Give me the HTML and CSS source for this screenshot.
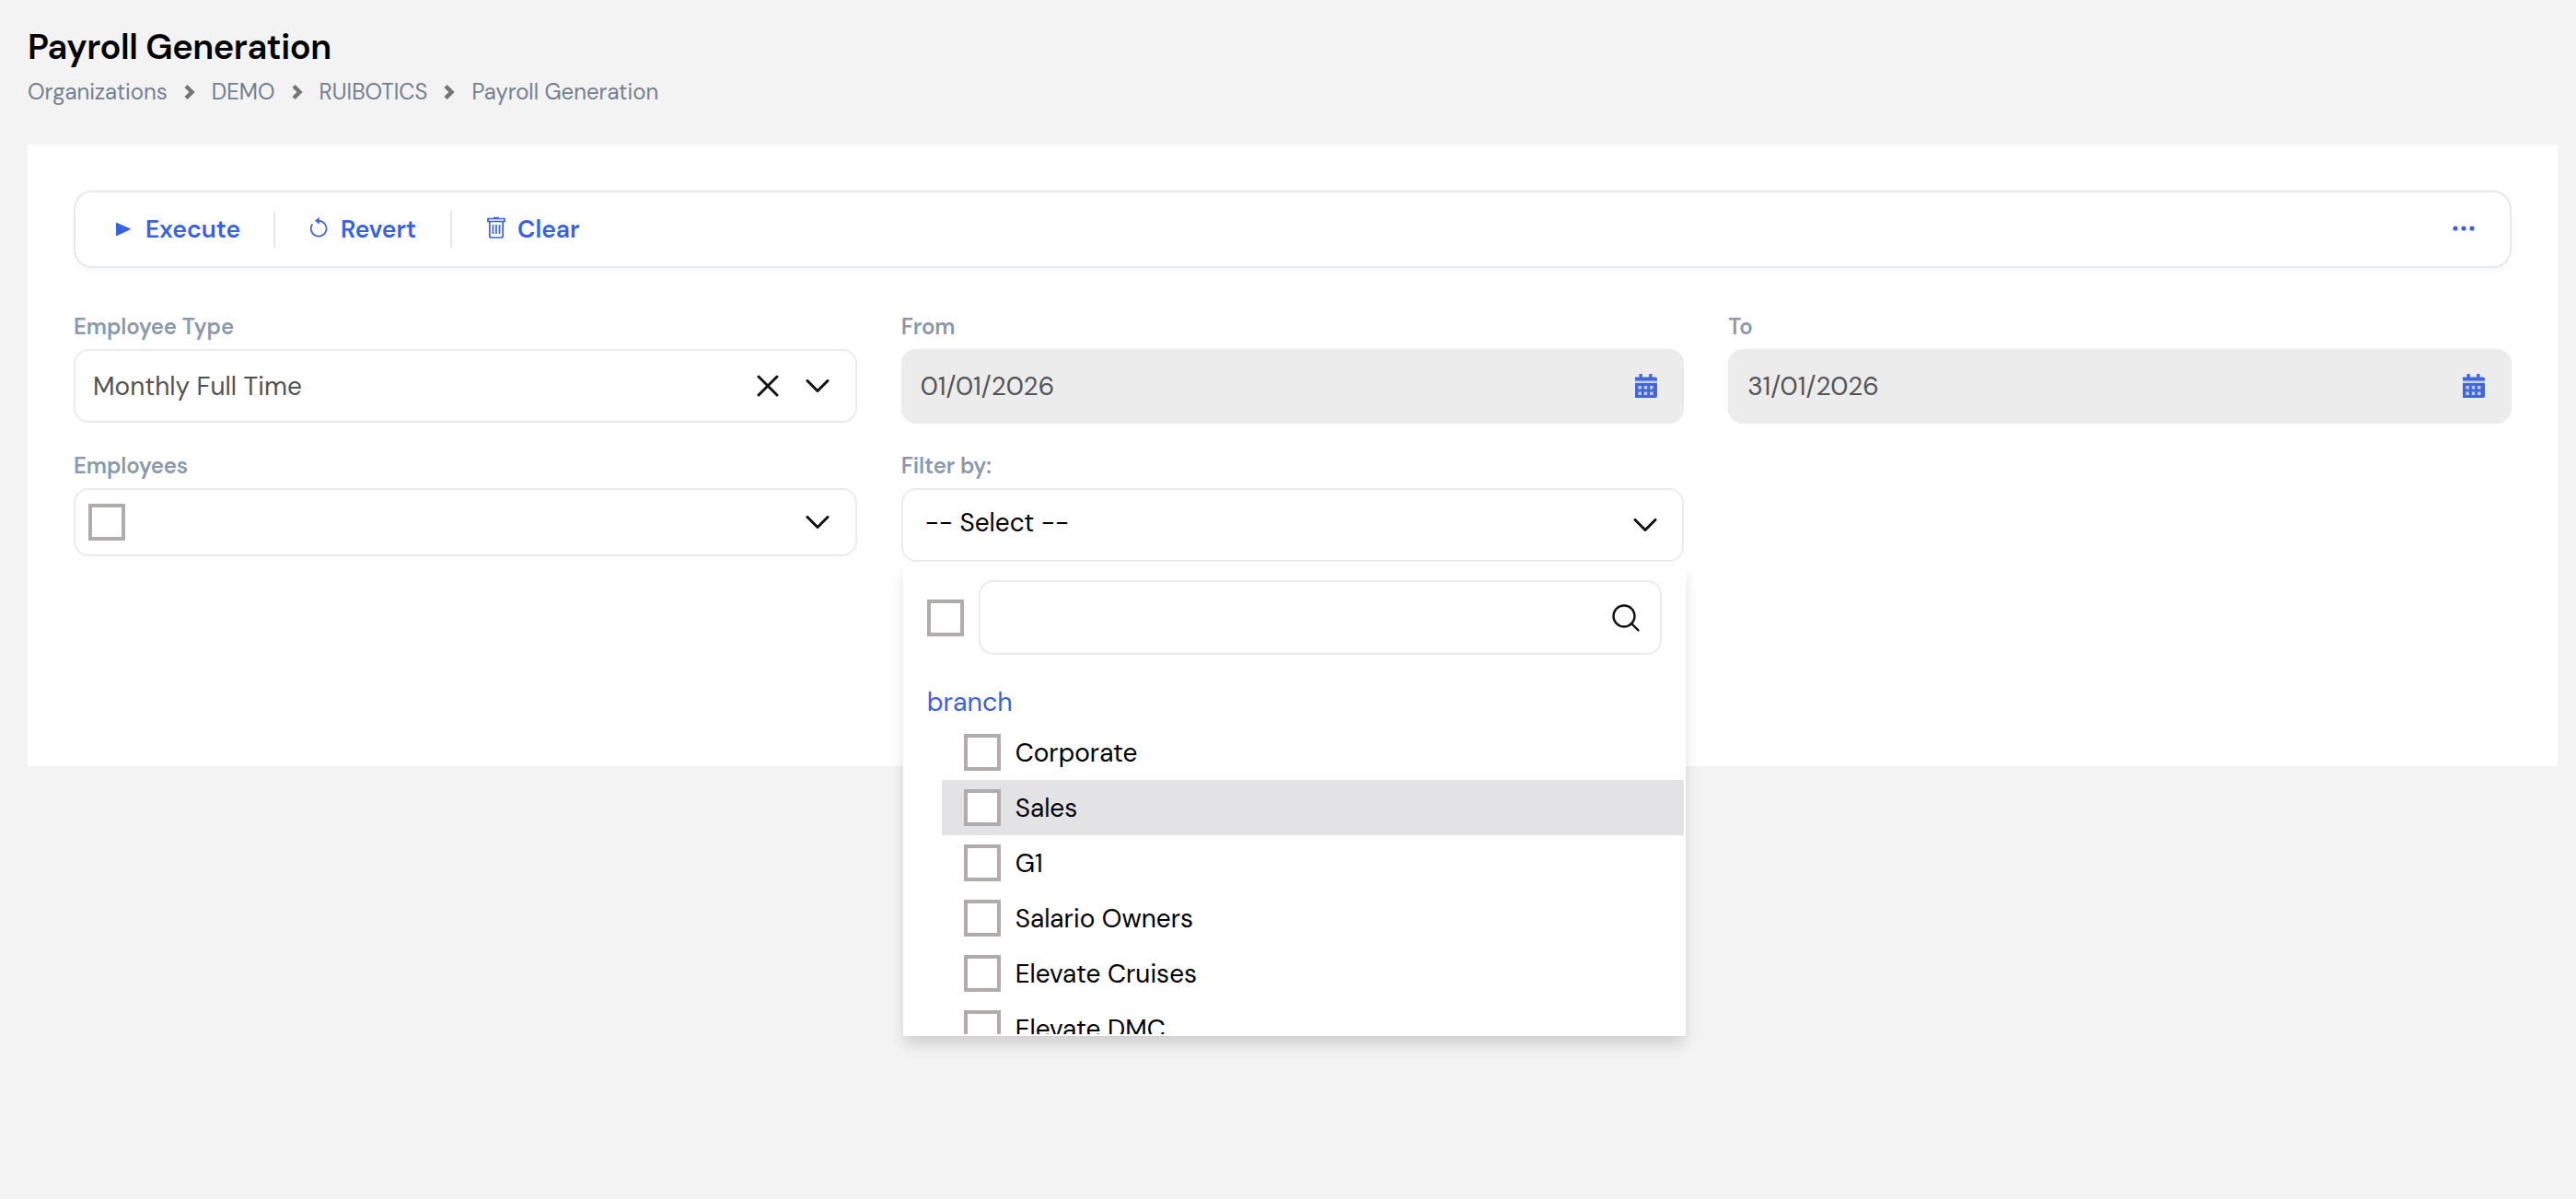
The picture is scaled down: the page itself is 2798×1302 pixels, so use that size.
FILE: index.html
```html
<!DOCTYPE html>
<html lang="en">
<head>
    <meta charset="UTF-8">
    <meta name="viewport" content="width=device-width, initial-scale=1.0">
    <title>Payroll Generation</title>
    <link rel="stylesheet" href="styles.css">
</head>
<body>
    <header class="page-header">
        <h1>Payroll Generation</h1>
        <nav class="breadcrumb">
            <a>Organizations</a>
            <svg class="sep" viewBox="0 0 12 16"><path d="M2 1.5L8.5 8 2 14.5" /></svg>
            <a>DEMO</a>
            <svg class="sep" viewBox="0 0 12 16"><path d="M2 1.5L8.5 8 2 14.5" /></svg>
            <a>RUIBOTICS</a>
            <svg class="sep" viewBox="0 0 12 16"><path d="M2 1.5L8.5 8 2 14.5" /></svg>
            <a>Payroll Generation</a>
        </nav>
    </header>

    <main class="card">
        <div class="toolbar">
            <button type="button" class="action execute">
                <svg class="icon-play" viewBox="0 0 16 16"><path d="M0 0.5L15 7q1 .8 0 1.6L0 15.5z" /></svg>
                <span>Execute</span>
            </button>
            <button type="button" class="action revert">
                <svg class="icon-revert" viewBox="0 0 20 22"><path class="line" d="M2.4 7.2A8.4 8.4 0 1 0 9.5 3.8" /><path d="M9.8 0v7.4L5 3.7z" /></svg>
                <span>Revert</span>
            </button>
            <button type="button" class="action clear">
                <svg class="icon-trash" viewBox="0 0 20 24"><path d="M7 1.5h6M1 2.5h18v3H1zM2.8 5.5v15.5q0 2 2 2h10.4q2 0 2-2V5.5M6.5 9v10M10 9v10M13.5 9v10" /></svg>
                <span>Clear</span>
            </button>
            <button type="button" class="more">
                <svg viewBox="0 0 24 6"><circle cx="3" cy="3" r="2.6" /><circle cx="12" cy="3" r="2.6" /><circle cx="21" cy="3" r="2.6" /></svg>
            </button>
        </div>

        <form class="filters">
            <div class="field">
                <label>Employee Type</label>
                <div class="control type">
                    <span>Monthly Full Time</span>
                    <svg class="icon-close" viewBox="0 0 24 24"><path d="M2 2l20 20M22 2L2 22" /></svg>
                    <svg class="icon-chevron" viewBox="0 0 26 14"><path d="M2 1.5l11 11 11-11" /></svg>
                </div>
            </div>
            <div class="field">
                <label>From</label>
                <div class="control disabled">
                    <span>01/01/2026</span>
                    <svg class="icon-calendar" viewBox="0 0 24 26"><path class="back" d="M0 7h24v17H0z" /><path d="M0 3.5h4.5V0h3.3v3.5h7.4V0h3.3v3.5H22q2 0 2 2v2H0zM0 10h24v14q0 2-2 2H0z" /><path class="dots" d="M3.5 13h3.4v3.4H3.5zM9.8 13h3.4v3.4H9.8zM16.1 13h3.4v3.4h-3.4zM3.5 19.6h3.4V23H3.5zM9.8 19.6h3.4V23H9.8zM16.1 19.6h3.4V23h-3.4z" /></svg>
                </div>
            </div>
            <div class="field">
                <label>To</label>
                <div class="control disabled">
                    <span>31/01/2026</span>
                    <svg class="icon-calendar" viewBox="0 0 24 26"><path class="back" d="M0 7h24v17H0z" /><path d="M0 3.5h4.5V0h3.3v3.5h7.4V0h3.3v3.5H22q2 0 2 2v2H0zM0 10h24v14q0 2-2 2H0z" /><path class="dots" d="M3.5 13h3.4v3.4H3.5zM9.8 13h3.4v3.4H9.8zM16.1 13h3.4v3.4h-3.4zM3.5 19.6h3.4V23H3.5zM9.8 19.6h3.4V23H9.8zM16.1 19.6h3.4V23h-3.4z" /></svg>
                </div>
            </div>
            <div class="field">
                <label>Employees</label>
                <div class="control employees">
                    <span class="checkbox"></span>
                    <svg class="icon-chevron" viewBox="0 0 26 14"><path d="M2 1.5l11 11 11-11" /></svg>
                </div>
            </div>
            <div class="field">
                <label>Filter by:</label>
                <div class="control filter">
                    <span>-- Select --</span>
                    <svg class="icon-chevron" viewBox="0 0 26 14"><path d="M2 1.5l11 11 11-11" /></svg>
                </div>
                <div class="dropdown">
                    <div class="search-row">
                        <span class="checkbox"></span>
                        <div class="search">
                            <svg class="icon-search" viewBox="0 0 30 30"><circle cx="13" cy="13" r="11.5" /><path d="M21 21l7.5 7.5" /></svg>
                        </div>
                    </div>
                    <div class="group">branch</div>
                    <ul class="options">
                        <li><span class="checkbox"></span>Corporate</li>
                        <li class="active"><span class="checkbox"></span>Sales</li>
                        <li><span class="checkbox"></span>G1</li>
                        <li><span class="checkbox"></span>Salario Owners</li>
                        <li><span class="checkbox"></span>Elevate Cruises</li>
                        <li><span class="checkbox"></span>Elevate DMC</li>
                    </ul>
                </div>
            </div>
        </form>
    </main>
</body>
</html>
```
FILE: styles.css
```css
* {
    box-sizing: border-box;
}

body {
    margin: 0;
    padding: 0 20px 0 30px;
    min-height: 100vh;
    background-color: #f3f3f3;
    color: #000;
    font-family: "DM Sans", Inter, sans-serif;
    font-size: 28px;
}

.page-header {
    height: 157px;
    padding-top: 26px;
}

h1 {
    margin: 0;
    font-size: 38px;
    line-height: 50px;
    font-weight: 600;
    letter-spacing: -0.42px;
}

.breadcrumb {
    display: flex;
    align-items: center;
    height: 47px;
    font-size: 24px;
    letter-spacing: -0.02px;
    color: #75808f;
}

.sep {
    width: 12px;
    height: 16px;
    margin: 1px 18px 0;
    overflow: visible;
    fill: none;
    stroke: #757575;
    stroke-width: 4.5;
}

.card {
    height: 675px;
    padding: 50px;
    background-color: #fff;
}

.toolbar {
    display: flex;
    align-items: center;
    height: 84px;
    padding: 0 38px 0 4px;
    border: 2px solid #e5e8ee;
    border-radius: 20px;
    box-shadow: 0 4px 8px rgba(0, 0, 0, 0.03);
}

button {
    display: flex;
    align-items: center;
    padding: 0;
    border: none;
    background: none;
    color: #3762e4;
    font: inherit;
    font-size: 26.5px;
    font-weight: 600;
    cursor: pointer;
}

button svg {
    fill: #3762e4;
}

.action {
    height: 40px;
    padding-left: 38px;
}

.execute {
    width: 211px;
    padding-left: 40px;
}

.revert {
    width: 192px;
}

.action + .action {
    border-left: 2px solid #e5e9ee;
}

.icon-play {
    width: 16px;
    height: 16px;
    margin-right: 16px;
}

.icon-revert {
    width: 20px;
    height: 22px;
    margin: 0 13px 4px 0;
}

.icon-revert .line,
.icon-trash path {
    fill: none;
    stroke: #3762e4;
    stroke-width: 1.7;
}

.icon-trash {
    width: 20px;
    height: 24px;
    margin: 0 13px 4px 0;
}

.more {
    margin-left: auto;
}

.more svg {
    width: 24px;
    height: 6px;
    margin-bottom: 2px;
}

.filters {
    display: grid;
    grid-template-columns: repeat(3, 1fr);
    column-gap: 48px;
    margin-top: 44px;
}

.field {
    position: relative;
    height: 151px;
}

label {
    display: block;
    height: 44px;
    line-height: 39px;
    font-size: 24px;
    font-weight: 600;
    letter-spacing: -0.1px;
    color: #8d98aa;
}

.control {
    display: flex;
    align-items: center;
    height: 80px;
    padding: 0 27px 0 19px;
    border: 2px solid #ebebeb;
    border-radius: 16px;
    color: #535353;
}

.type {
    padding-right: 28px;
}

.disabled {
    height: 81px;
    background-color: #ececec;
    color: #54545c;
}

.employees {
    height: 74px;
    padding: 0 28px 0 14px;
}

.filter {
    padding-left: 24px;
    color: #000;
}

.filter span {
    margin-bottom: 6px;
}

.control svg {
    flex: none;
}

.icon-chevron,
.icon-close,
.icon-search {
    fill: none;
    stroke: #111;
    stroke-width: 3;
    stroke-linecap: round;
}

.icon-chevron {
    width: 26px;
    height: 14px;
    margin-left: auto;
}

.icon-close {
    width: 24px;
    height: 24px;
    margin-left: auto;
    margin-right: 29px;
    margin-bottom: 1px;
}

.icon-close + .icon-chevron {
    margin-left: 0;
}

.icon-calendar {
    width: 24px;
    height: 26px;
    margin-left: auto;
    margin-bottom: 1px;
    fill: #4267db;
}

.icon-calendar .back,
.icon-calendar .dots {
    fill: #c5cfee;
}

.checkbox {
    flex: none;
    width: 40px;
    height: 40px;
    border: 4px solid #b0acac;
    background-color: #fff;
}

.dropdown {
    position: absolute;
    top: 128px;
    left: 2px;
    z-index: 1;
    width: 100%;
    height: 511px;
    padding: 16px 26px 0;
    border-bottom: 2px solid #fff;
    background-color: #fff;
    box-shadow: 0 10px 16px -2px rgba(0, 0, 0, 0.16);
    overflow: hidden;
    color: #000;
}

.search-row {
    display: flex;
    align-items: center;
    gap: 16px;
}

.search {
    display: flex;
    flex: 1;
    align-items: center;
    justify-content: flex-end;
    height: 81px;
    padding-right: 22px;
    border: 2px solid #ebebeb;
    border-radius: 16px;
}

.icon-search {
    width: 30px;
    height: 30px;
    stroke-width: 2.4;
}

.group {
    height: 76px;
    padding-top: 32px;
    line-height: 40px;
    font-size: 28.5px;
    color: #3762e4;
}

.options {
    margin: 0 -24px 0 16px;
    padding: 0;
    list-style: none;
}

.options li {
    display: flex;
    align-items: center;
    gap: 16px;
    height: 60px;
    padding-left: 24px;
}

.options .active {
    background-color: #e3e3e5;
}
```
